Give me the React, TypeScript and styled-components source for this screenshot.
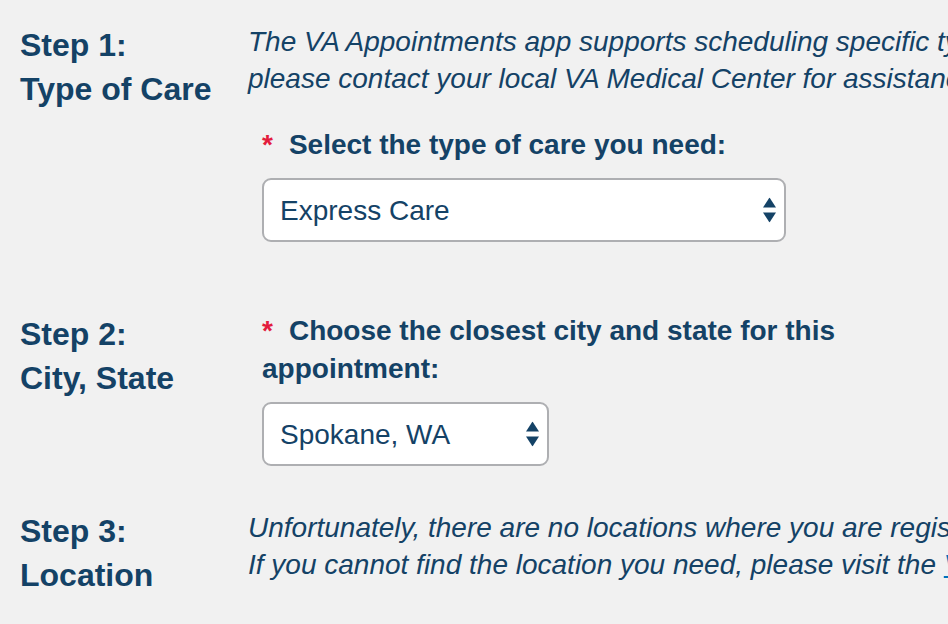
import React from "react";
import styled, { createGlobalStyle } from "styled-components";

const GlobalStyle = createGlobalStyle`
  html, body {
    margin: 0;
    padding: 0;
    background: #f1f1f1;
    overflow: hidden;
  }
  body {
    font-family: "Liberation Sans", Arial, Helvetica, sans-serif;
    color: #144266;
  }
`;

const Page = styled.main`
  width: 948px;
  height: 624px;
  box-sizing: border-box;
  padding: 23px 0 0 20px;
  background: #f1f1f1;
  overflow: hidden;
`;

const Step = styled.section<{ $after: number }>`
  display: grid;
  grid-template-columns: 228px 1200px;
  align-items: start;
  padding-bottom: ${(p) => p.$after}px;
`;

const StepTitle = styled.h2`
  margin: 0;
  font-size: 32px;
  line-height: 44px;
  font-weight: 700;
  color: #144266;
  white-space: nowrap;
`;

const StepBody = styled.div`
  display: flex;
  flex-direction: column;
`;

const Intro = styled.p`
  margin: 0;
  font-size: 28px;
  line-height: 37px;
  font-style: italic;
  white-space: nowrap;
  color: #144266;
`;

const Link = styled.a`
  color: #0071bb;
  text-decoration: underline;
`;

const Field = styled.div<{ $top: number }>`
  display: flex;
  flex-direction: column;
  align-items: flex-start;
  margin: ${(p) => p.$top}px 0 0 14px;
`;

const Label = styled.label`
  display: block;
  max-width: 620px;
  margin-bottom: 14px;
  font-size: 28px;
  line-height: 38px;
  font-weight: 700;
  color: #144266;
`;

const Required = styled.span`
  color: #e31c3d;
  margin-right: 16px;
`;

const SelectWrap = styled.div<{ $width: number }>`
  position: relative;
  width: ${(p) => p.$width}px;
`;

const Select = styled.select`
  appearance: none;
  -webkit-appearance: none;
  width: 100%;
  height: 64px;
  box-sizing: border-box;
  margin: 0;
  padding: 0 40px 0 16px;
  border: 2px solid #aeafb2;
  border-radius: 9px;
  background: #ffffff;
  font-family: "Liberation Sans", Arial, Helvetica, sans-serif;
  font-size: 28px;
  color: #144266;
  outline: none;
`;

const Arrows = styled.svg`
  position: absolute;
  right: 10px;
  top: 50%;
  width: 13px;
  height: 25px;
  transform: translateY(-50%);
  pointer-events: none;
`;

const SelectArrows = () => (
  <Arrows viewBox="0 0 13 25" aria-hidden="true">
    <polygon points="6.5,0 13,10 0,10" fill="#144266" />
    <polygon points="0,15 13,15 6.5,25" fill="#144266" />
  </Arrows>
);

export default function App() {
  return (
    <>
      <GlobalStyle />
      <Page>
        <Step $after={70}>
          <StepTitle>
            Step 1:
            <br />
            Type of Care
          </StepTitle>
          <StepBody>
            <Intro>
              The VA Appointments app supports scheduling specific types of care through this tool. For other types of care,
              <br />
              please contact your local VA Medical Center for assistance.
            </Intro>
            <Field $top={29}>
              <Label htmlFor="care-type">
                <Required>*</Required>Select the type of care you need:
              </Label>
              <SelectWrap $width={524}>
                <Select id="care-type" defaultValue="express">
                  <option value="express">Express Care</option>
                  <option value="primary">Primary Care</option>
                  <option value="mental">Mental Health</option>
                </Select>
                <SelectArrows />
              </SelectWrap>
            </Field>
          </StepBody>
        </Step>

        <Step $after={43}>
          <StepTitle>
            Step 2:
            <br />
            City, State
          </StepTitle>
          <StepBody>
            <Field $top={0}>
              <Label htmlFor="city-state">
                <Required>*</Required>Choose the closest city and state for this appointment:
              </Label>
              <SelectWrap $width={287}>
                <Select id="city-state" defaultValue="spokane">
                  <option value="spokane">Spokane, WA</option>
                  <option value="seattle">Seattle, WA</option>
                </Select>
                <SelectArrows />
              </SelectWrap>
            </Field>
          </StepBody>
        </Step>

        <Step $after={0}>
          <StepTitle>
            Step 3:
            <br />
            Location
          </StepTitle>
          <StepBody>
            <Intro>
              Unfortunately, there are no locations where you are registered that offer this type of care.
              <br />
              If you cannot find the location you need, please visit the <Link href="#">VA Facility Locator</Link>.
            </Intro>
          </StepBody>
        </Step>
      </Page>
    </>
  );
}
